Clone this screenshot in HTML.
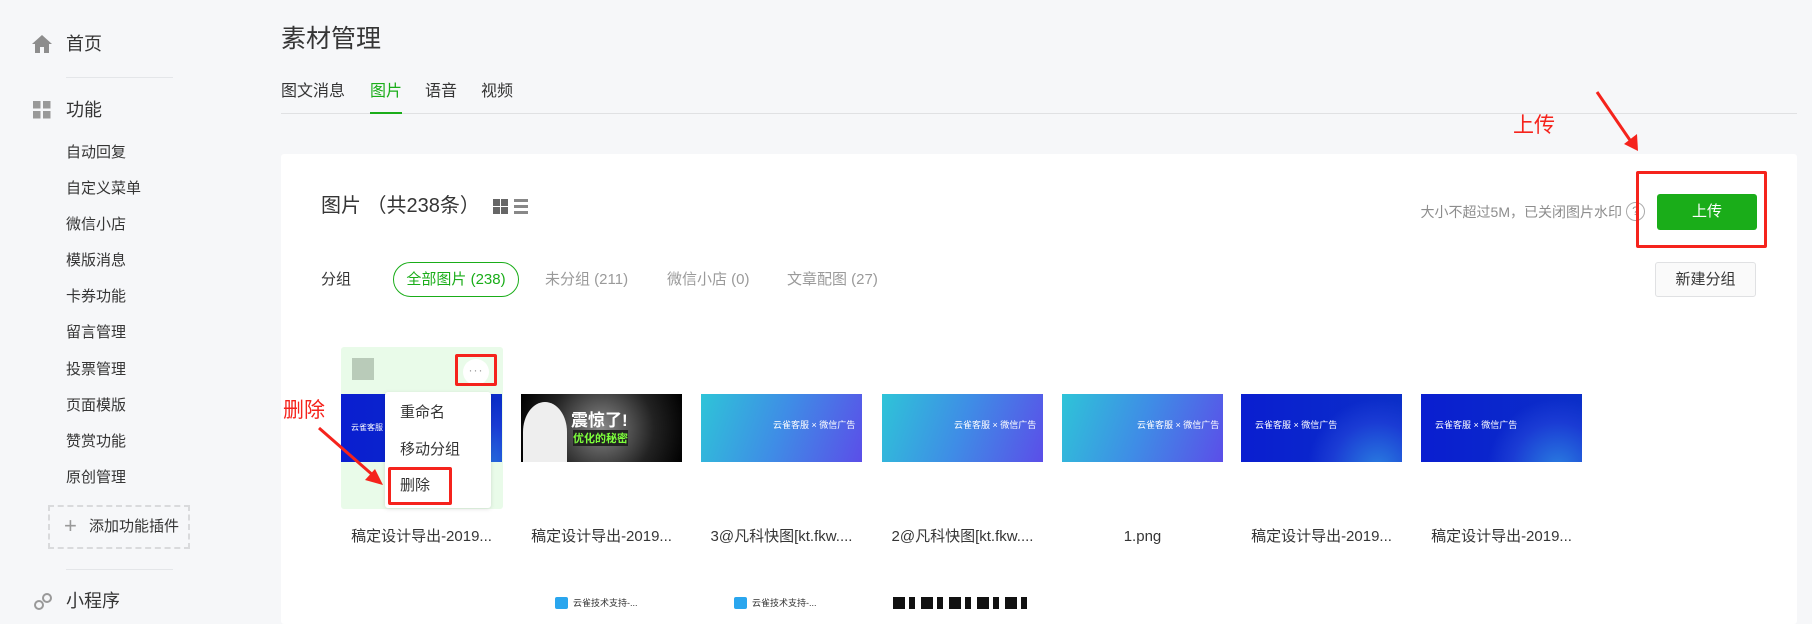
<!DOCTYPE html>
<html><head><meta charset="utf-8"><style>
*{margin:0;padding:0;box-sizing:border-box}
body{width:1812px;height:609px;overflow:hidden;background:#f6f7f9;font-family:"Liberation Sans","Noto Sans CJK SC",sans-serif;color:#353535;position:relative}
.a{position:absolute;white-space:nowrap}
.m{font-size:15px;left:66px;line-height:20px}
.img{position:absolute;top:394px;width:161px;height:68px;overflow:hidden}
.cy{background:linear-gradient(110deg,#2ec4d8 0%,#3f8ce6 50%,#5b4ee8 100%)}
.bl{background:radial-gradient(circle at 85% 110%,#2a7ee0 0,#1a3bd4 30%,transparent 45%),linear-gradient(90deg,#0a1ed0,#0b2fc8)}
.fn{position:absolute;top:527px;width:161px;text-align:center;font-size:15px;line-height:20px;color:#353535}
.t{color:#fff;font-size:8px;position:absolute}
</style></head><body>
<!-- sidebar -->
<svg class="a" style="left:31px;top:34px" width="22" height="20" viewBox="0 0 22 20"><path d="M11 1L1 10h3v9h5v-6h4v6h5v-9h3z" fill="#8d8d8d"/></svg>
<div class="a" style="left:66px;top:33px;font-size:18px;line-height:22px">首页</div>
<div class="a" style="left:66px;top:77px;width:107px;height:1px;background:#e4e6e9"></div>
<svg class="a" style="left:33px;top:101px" width="18" height="18"><rect x="0" y="0" width="7.5" height="7.5" fill="#999"/><rect x="10" y="0" width="7.5" height="7.5" fill="#999"/><rect x="0" y="10" width="7.5" height="7.5" fill="#999"/><rect x="10" y="10" width="7.5" height="7.5" fill="#999"/></svg>
<div class="a" style="left:66px;top:99px;font-size:18px;line-height:22px">功能</div>
<div class="a m" style="top:143px">自动回复</div>
<div class="a m" style="top:179px">自定义菜单</div>
<div class="a m" style="top:215px">微信小店</div>
<div class="a m" style="top:251px">模版消息</div>
<div class="a m" style="top:287px">卡券功能</div>
<div class="a m" style="top:323px">留言管理</div>
<div class="a m" style="top:360px">投票管理</div>
<div class="a m" style="top:396px">页面模版</div>
<div class="a m" style="top:432px">赞赏功能</div>
<div class="a m" style="top:468px">原创管理</div>
<div class="a" style="left:48px;top:505px;width:142px;height:44px;border:2px dashed #d9dadc"></div>
<div class="a" style="left:64px;top:515px;font-size:22px;color:#999;line-height:22px;font-weight:300">+</div>
<div class="a" style="left:89px;top:517px;font-size:15px;line-height:20px">添加功能插件</div>
<div class="a" style="left:66px;top:569px;width:107px;height:1px;background:#e4e6e9"></div>
<svg class="a" style="left:33px;top:592px" width="20" height="20"><circle cx="6" cy="13" r="4" fill="none" stroke="#999" stroke-width="2"/><circle cx="14" cy="6" r="4" fill="none" stroke="#999" stroke-width="2"/></svg>
<div class="a" style="left:66px;top:589px;font-size:18px;line-height:24px">小程序</div>
<!-- main -->
<div class="a" style="left:281px;top:24px;font-size:25px;line-height:30px;color:#353535">素材管理</div>
<div class="a" style="left:281px;top:113px;width:1516px;height:1px;background:#e0e1e3"></div>
<div class="a" style="left:281px;top:82px;font-size:16px;line-height:20px">图文消息</div>
<div class="a" style="left:370px;top:82px;font-size:16px;line-height:20px;color:#1aad19">图片</div>
<div class="a" style="left:370px;top:112px;width:32px;height:2px;background:#1aad19"></div>
<div class="a" style="left:425px;top:82px;font-size:16px;line-height:20px">语音</div>
<div class="a" style="left:481px;top:82px;font-size:16px;line-height:20px">视频</div>
<div class="a" style="left:281px;top:154px;width:1516px;height:470px;background:#fff;border-radius:3px"></div>
<div class="a" style="left:321px;top:194px;font-size:20px;line-height:24px">图片 （共238条）</div>
<svg class="a" style="left:493px;top:199px" width="15" height="15"><rect x="0" y="0" width="7" height="7" fill="#666"/><rect x="8" y="0" width="7" height="7" fill="#666"/><rect x="0" y="8" width="7" height="7" fill="#666"/><rect x="8" y="8" width="7" height="7" fill="#666"/></svg>
<svg class="a" style="left:514px;top:199px" width="14" height="15"><rect y="0" width="14" height="3" fill="#888"/><rect y="6" width="14" height="3" fill="#888"/><rect y="12" width="14" height="3" fill="#888"/></svg>
<div class="a" style="right:190px;top:202px;font-size:14px;line-height:20px;color:#8d8d8d;text-align:right">大小不超过5M，已关闭图片水印</div>
<div class="a" style="left:1626px;top:202px;width:19px;height:19px;border:1.5px solid #aaa;border-radius:50%;font-size:12px;color:#999;text-align:center;line-height:16px">?</div>
<div class="a" style="left:1657px;top:194px;width:100px;height:36px;background:#1aad19;border-radius:3px;color:#fff;font-size:15px;text-align:center;line-height:36px">上传</div>
<div class="a" style="left:1636px;top:171px;width:131px;height:77px;border:3px solid #f5231c;border-radius:2px"></div>
<div class="a" style="left:1513px;top:113px;font-size:21px;color:#f5231c;line-height:26px">上传</div>
<svg class="a" style="left:1590px;top:88px" width="60" height="70"><path d="M7 4L44 58" stroke="#f5231c" stroke-width="3"/><path d="M34 56L48 63L47 46z" fill="#f5231c"/></svg>
<div class="a" style="left:321px;top:270px;font-size:15px;line-height:20px">分组</div>
<div class="a" style="left:393px;top:262px;width:126px;height:35px;border:1px solid #1aad19;border-radius:18px;color:#1aad19;font-size:15px;text-align:center;line-height:33px">全部图片 (238)</div>
<div class="a" style="left:545px;top:270px;font-size:15px;line-height:20px;color:#9a9a9a">未分组 (211)</div>
<div class="a" style="left:667px;top:270px;font-size:15px;line-height:20px;color:#9a9a9a">微信小店 (0)</div>
<div class="a" style="left:787px;top:270px;font-size:15px;line-height:20px;color:#9a9a9a">文章配图 (27)</div>
<div class="a" style="left:1655px;top:262px;width:101px;height:35px;border:1px solid #e0e1e3;border-radius:3px;background:#fafafa;font-size:15px;text-align:center;line-height:33px">新建分组</div>
<!-- thumbs -->
<div class="a" style="left:341px;top:347px;width:162px;height:162px;background:#e9fbe9;border-radius:3px"></div>
<div class="a" style="left:352px;top:358px;width:22px;height:22px;background:#b9cbb9"></div>
<div class="a" style="left:463px;top:359px;width:26px;height:26px;background:#fff;border-radius:50%;text-align:center;font-size:12px;color:#999;line-height:22px;letter-spacing:1px">···</div>
<div class="a" style="left:455px;top:354px;width:42px;height:32px;border:3px solid #f5231c;border-radius:2px"></div>
<div class="img bl" style="left:341px"><span class="t" style="left:10px;top:28px">云雀客服</span></div>
<div class="img" style="left:521px;background:radial-gradient(circle at 50% 50%,#888 0,#222 60%,#000 100%)"><span class="a" style="left:50px;top:12px;color:#fff;font-size:17px;font-weight:bold">震惊了!</span><span class="a" style="left:52px;top:36px;color:#7dff3c;font-size:11px;font-weight:bold;background:#222">优化的秘密</span><div class="a" style="left:2px;top:8px;width:44px;height:60px;background:#eee;border-radius:50% 50% 0 0"></div></div>
<div class="img cy" style="left:701px"><span class="t" style="left:72px;top:24px;font-size:9px">云雀客服 × 微信广告</span></div>
<div class="img cy" style="left:882px"><span class="t" style="left:72px;top:24px;font-size:9px">云雀客服 × 微信广告</span></div>
<div class="img cy" style="left:1062px"><span class="t" style="left:75px;top:24px;font-size:9px">云雀客服 × 微信广告</span></div>
<div class="img bl" style="left:1241px"><span class="t" style="left:14px;top:24px;font-size:9px">云雀客服 × 微信广告</span></div>
<div class="img bl" style="left:1421px"><span class="t" style="left:14px;top:24px;font-size:9px">云雀客服 × 微信广告</span></div>
<div class="fn" style="left:341px">稿定设计导出-2019...</div>
<div class="fn" style="left:521px">稿定设计导出-2019...</div>
<div class="fn" style="left:701px">3@凡科快图[kt.fkw....</div>
<div class="fn" style="left:882px">2@凡科快图[kt.fkw....</div>
<div class="fn" style="left:1062px">1.png</div>
<div class="fn" style="left:1241px">稿定设计导出-2019...</div>
<div class="fn" style="left:1421px">稿定设计导出-2019...</div>
<!-- popup -->
<div class="a" style="left:385px;top:392px;width:106px;height:116px;background:#fff;border-radius:3px;box-shadow:0 1px 4px rgba(0,0,0,.12)"></div>
<div class="a" style="left:400px;top:403px;font-size:15px;line-height:20px">重命名</div>
<div class="a" style="left:400px;top:440px;font-size:15px;line-height:20px">移动分组</div>
<div class="a" style="left:400px;top:476px;font-size:15px;line-height:20px">删除</div>
<div class="a" style="left:388px;top:467px;width:64px;height:38px;border:3px solid #f5231c;border-radius:2px"></div>
<div class="a" style="left:283px;top:398px;font-size:21px;color:#f5231c;line-height:26px">删除</div>
<svg class="a" style="left:315px;top:425px" width="75" height="65"><path d="M4 3L60 52" stroke="#f5231c" stroke-width="3"/><path d="M50 55L68 60L60 44z" fill="#f5231c"/></svg>
<!-- bottom row -->
<div class="a" style="left:555px;top:597px;width:13px;height:12px;background:#2aa6ee;border-radius:2px"></div>
<div class="a" style="left:573px;top:596px;font-size:9px;color:#333">云雀技术支持-...</div>
<div class="a" style="left:734px;top:597px;width:13px;height:12px;background:#2aa6ee;border-radius:2px"></div>
<div class="a" style="left:752px;top:596px;font-size:9px;color:#333">云雀技术支持-...</div>
<div class="a" style="left:893px;top:597px;width:138px;height:12px;background:repeating-linear-gradient(90deg,#111 0 12px,#fff 12px 16px,#111 16px 22px,#fff 22px 28px)"></div>
</body></html>
